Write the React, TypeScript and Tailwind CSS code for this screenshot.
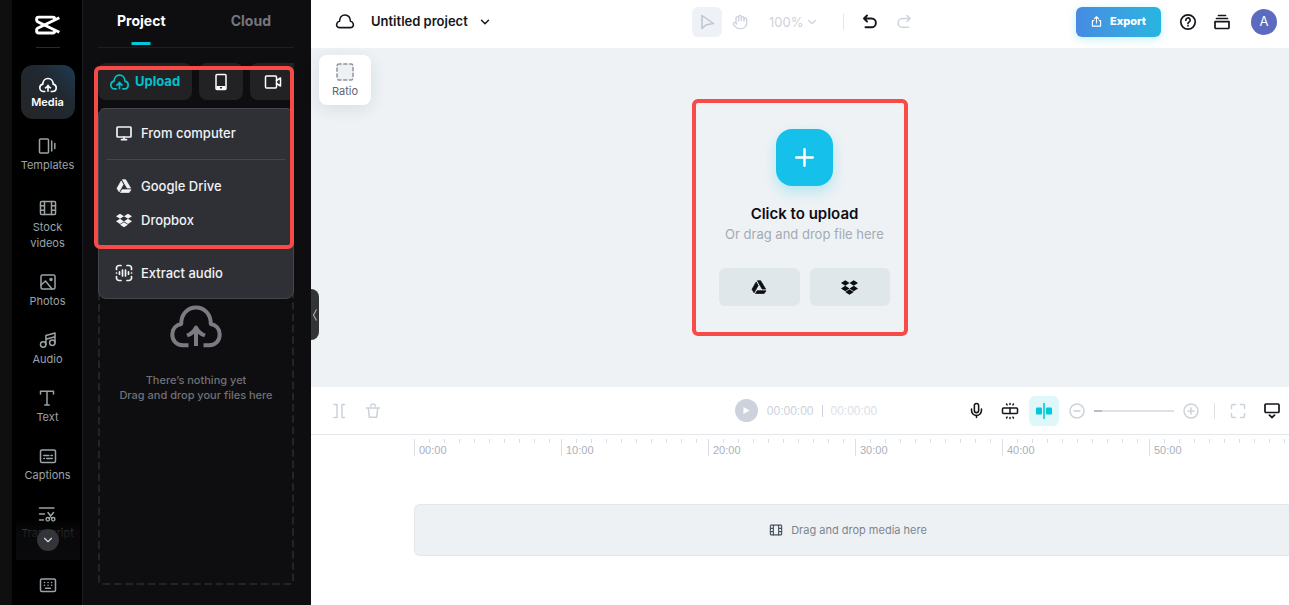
import * as React from 'react';
import { FaDropbox } from 'react-icons/fa';
import { ChevronDown, ChevronLeft, Hand, Mic } from 'lucide-react';

const RULER_MARKS = ['00:00', '10:00', '20:00', '30:00', '40:00', '50:00'];
const MINOR_TICKS = [1, 2, 3, 4, 5, 6, 7, 8, 9];

type IconProps = { className?: string; strokeWidth?: number };

function Svg({
  box,
  className,
  strokeWidth = 1.5,
  children,
}: IconProps & { box: string; children: React.ReactNode }) {
  return (
    <svg
      viewBox={box}
      className={className}
      fill="none"
      stroke="currentColor"
      strokeWidth={strokeWidth}
      strokeLinecap="round"
      strokeLinejoin="round"
      aria-hidden="true"
    >
      {children}
    </svg>
  );
}

function LogoIcon({ className }: IconProps) {
  return (
    <svg viewBox="0 0 76 60" className={className} fill="none" stroke="currentColor" strokeWidth="9" aria-hidden="true">
      <path d="M60 15v-3a6 6 0 0 0-6-6H11a6 6 0 0 0-6 6v3q0 3 3 5L74 52" />
      <path d="M60 45v3a6 6 0 0 1-6 6H11a6 6 0 0 1-6-6v-3q0-3 3-5L74 8" />
    </svg>
  );
}

function CloudUploadIcon({ className, strokeWidth = 4 }: IconProps) {
  return (
    <svg viewBox="0 0 52 43" className={className} fill="none" stroke="currentColor" strokeWidth={strokeWidth} strokeLinejoin="round" aria-hidden="true">
      <path d="M18.500 40.300H13C7 40.300 2.300 36 2.300 29.500c0-5.500 3.500-9.500 8.900-10.500C11.200 9 17.500 2.500 26 2.500S40.800 9 40.800 19c5.400 1 8.900 5 8.900 10.500 0 6.500-4.700 10.800-10.700 10.800h-5.500" />
      <path d="M26 41V22.500M17 30.500l2.500-1Q24 27 26 22.500q2 4.500 6.500 7l2.500 1" />
    </svg>
  );
}

function DriveIcon({ className }: IconProps) {
  return (
    <svg viewBox="0 0 22 20" className={className} fill="currentColor" stroke="currentColor" strokeLinejoin="round" aria-hidden="true">
      <path d="M8.700 1H13.300L20.500 13H15.500Z" />
      <path d="M7 2.800L9.800 7.800L4 18.300L1 13.300Z" />
      <path d="M8.300 15.300H21L18.300 19.300H6Z" />
    </svg>
  );
}

function FilmIcon({ className }: IconProps) {
  return (
    <Svg box="0 0 18 16" className={className}>
      <rect x="1.500" y="1.500" width="15" height="13" rx="1" />
      <path d="M5.500 1.500v13M12.500 1.500v13M1.500 5.800h4M1.500 10.200h4M12.500 5.800h4M12.500 10.200h4" />
    </Svg>
  );
}

function TemplatesIcon({ className }: IconProps) {
  return (
    <Svg box="0 0 18 18" className={className}>
      <rect x="1.500" y="2" width="9" height="14" rx="1" />
      <path d="M13.700 4v10M16.800 6.500v5" />
    </Svg>
  );
}

function PhotosIcon({ className }: IconProps) {
  return (
    <Svg box="0 0 18 18" className={className}>
      <rect x="2" y="2" width="14" height="14" rx="1.500" />
      <path d="M2 12l4.500-4L13 16" />
      <circle cx="12" cy="6.500" r="1" fill="currentColor" />
    </Svg>
  );
}

function AudioIcon({ className }: IconProps) {
  return (
    <Svg box="0 0 18 18" className={className}>
      <circle cx="4.200" cy="13.500" r="2.700" />
      <circle cx="13.300" cy="11.800" r="2.700" />
      <path d="M6.900 13.500V4.500L16 2v9.800M6.900 8.200L16 5.800" />
    </Svg>
  );
}

function TextIcon({ className }: IconProps) {
  return (
    <Svg box="0 0 18 18" className={className}>
      <path d="M2.500 5V2.300h13V5M9 2.300V16M6.800 16h4.400" />
    </Svg>
  );
}

function CaptionsIcon({ className }: IconProps) {
  return (
    <Svg box="0 0 18 18" className={className}>
      <rect x="1.500" y="3" width="15" height="12.500" rx="1.500" />
      <path d="M4.800 8.500h5M12 8.500h1.300M4.800 11.500h.6M7.600 11.500h5.700" />
    </Svg>
  );
}

function TranscriptIcon({ className }: IconProps) {
  return (
    <Svg box="0 0 18 18" className={className}>
      <path d="M1.500 3h14.500M1.500 9h5M1.500 15h4" />
      <path d="M10 7.500l4 5.500M15.500 7.500l-4.500 5.500" />
      <circle cx="9.800" cy="14.300" r="1.700" />
      <circle cx="15.200" cy="14.300" r="1.700" />
    </Svg>
  );
}

function KeyboardIcon({ className }: IconProps) {
  return (
    <Svg box="0 0 18 18" className={className}>
      <rect x="1.500" y="3" width="15" height="12.500" rx="1.500" />
      <path d="M5.500 6.500h.1M9 6.500h.1M12.500 6.500h.1M5.500 9.200h.1M9 9.200h.1M12.500 9.200h.1M6.500 12.300h5" />
    </Svg>
  );
}

const NAV_ITEMS = [
  { label: 'Templates', Icon: TemplatesIcon, className: 'mb-1' },
  { label: 'Stock videos', Icon: FilmIcon, className: '' },
  { label: 'Photos', Icon: PhotosIcon, className: '' },
  { label: 'Audio', Icon: AudioIcon, className: '' },
  { label: 'Text', Icon: TextIcon, className: '' },
  { label: 'Captions', Icon: CaptionsIcon, className: '' },
  { label: 'Transcript', Icon: TranscriptIcon, className: '' },
];

function NavRail() {
  return (
    <aside className="flex w-[71px] shrink-0 flex-col items-center border-r border-[#1c1c20] bg-black pl-px text-[#9ba3a6]">
      <LogoIcon className="mt-[15px] h-5 w-[25px] shrink-0 text-white" />
      <div className="mt-3 h-px w-6 shrink-0 bg-[#2a2a2c]" />
      <nav className="relative mt-[17px] flex min-h-0 w-16 flex-1 flex-col items-center overflow-hidden">
        <button className="mb-[7px] flex h-[54px] w-[54px] shrink-0 flex-col items-center justify-center rounded-xl bg-linear-to-bl from-[#1d3a54] via-[#202830] via-40% to-[#242528] pt-0.5 text-white">
          <CloudUploadIcon className="h-[18px] w-[18px]" strokeWidth={4.600} />
          <span className="text-[11px] leading-4 font-semibold">Media</span>
        </button>
        {NAV_ITEMS.map(({ label, Icon, className }) => (
          <button key={label} className={`flex shrink-0 flex-col items-center gap-0.5 py-[11px] ${className}`}>
            <Icon className="h-[18px] w-[18px]" />
            <span className="max-w-[54px] text-center text-[11px] leading-4">{label}</span>
          </button>
        ))}
        <div className="absolute inset-x-0 bottom-0 flex h-[41px] justify-center bg-linear-to-b from-transparent via-[#0a0a0c]/85 via-30% to-[#0a0a0c]">
          <button aria-label="More tools" className="mt-2.5 flex h-[22px] w-[22px] items-center justify-center rounded-full bg-[#34353a] text-[#d5d7da]">
            <ChevronDown size={14} />
          </button>
        </div>
      </nav>
      <button aria-label="Keyboard shortcuts" className="flex h-[45px] shrink-0 items-center pt-1">
        <KeyboardIcon className="h-[18px] w-[18px]" />
      </button>
    </aside>
  );
}

function MenuItem({ icon, label }: { icon: React.ReactNode; label: string }) {
  return (
    <button role="menuitem" className="flex h-[34px] items-center gap-[9px] px-[9px] text-[13px] font-medium text-[#f2f3f5]">
      <span className="flex w-4 justify-center">{icon}</span>
      {label}
    </button>
  );
}

function UploadMenu() {
  return (
    <div role="menu" className="absolute inset-x-0 top-0 flex flex-col rounded-lg border border-[#46474d] bg-[#2f3036] px-2 pt-[7px] pb-2">
      <MenuItem
        label="From computer"
        icon={
          <Svg box="0 0 16 16" className="h-4 w-4" strokeWidth={1.700}>
            <rect x="1" y="2" width="14" height="10" rx="0.800" />
            <path d="M8 12v2.500M5.500 14.700h5" />
          </Svg>
        }
      />
      <div className="my-[9px] h-px bg-[#46474d]" />
      <MenuItem label="Google Drive" icon={<DriveIcon className="h-3.5 w-4" />} />
      <MenuItem label="Dropbox" icon={<FaDropbox size={17} />} />
      <div className="my-[9px] h-px bg-[#46474d]" />
      <MenuItem
        label="Extract audio"
        icon={
          <Svg box="0 0 16 16" className="h-4 w-4 overflow-visible" strokeWidth={1.700}>
            <path d="M0.500 4.500V3A2.500 2.500 0 0 1 3 0.500h2M11 0.500h2A2.500 2.500 0 0 1 15.500 3v1.500M15.500 11.500V13a2.500 2.500 0 0 1-2.500 2.500h-2M5 15.500H3A2.500 2.500 0 0 1 0.500 13v-1.500" />
            <path d="M0.500 8h.1M3.500 6.800v2.400M6.500 5v6M9.500 5v6M12.500 6.800v2.400M15.500 8h.1" />
          </Svg>
        }
      />
    </div>
  );
}

function MediaPanel() {
  return (
    <section className="relative flex w-[228px] shrink-0 flex-col bg-[#0e0e10] pr-[17px] pb-[22px] pl-[15px]">
      <div role="tablist" className="flex h-12 shrink-0 justify-between border-b border-[#1f1f22] pr-[23px] pl-[19px] text-sm font-bold">
        <button role="tab" aria-selected="true" className="relative pb-1.5 text-white">
          Project
          <span className="absolute bottom-0.5 left-1/2 h-[3px] w-[19px] -translate-x-1/2 bg-[#00c8dc]" />
        </button>
        <button role="tab" aria-selected="false" className="pb-1.5 text-[#75767c]">
          Cloud
        </button>
      </div>

      <div className="mt-[15px] flex h-[37px] shrink-0 gap-[7px] text-white">
        <button className="flex flex-1 items-center gap-1.5 rounded-lg bg-[#222225] pl-3 text-[13px] font-bold text-[#00c1cd]">
          <CloudUploadIcon className="h-[18px] w-[19px]" strokeWidth={4.600} />
          Upload
        </button>
        <button aria-label="Upload from phone" className="flex w-11 items-center justify-center rounded-lg bg-[#222225]">
          <Svg box="0 0 16 18" className="h-[18px] w-4">
            <rect x="3" y="1.500" width="10" height="15" rx="1" />
            <path d="M3.500 14.500h9" strokeWidth="3" strokeLinecap="butt" />
            <path d="M7.500 14.700h1" stroke="#222225" />
          </Svg>
        </button>
        <button aria-label="Record" className="flex w-11 items-center justify-center rounded-l-lg bg-[#222225] pl-0.5">
          <Svg box="0 0 18 16" className="h-4 w-[18px]">
            <rect x="1.500" y="2" width="11" height="12" rx="1" />
            <path d="M12.500 6.500l4-2.500v8l-4-2.500" />
          </Svg>
        </button>
      </div>

      <div className="relative mt-2 flex flex-1 flex-col items-center justify-center pt-[17px] text-center text-[11px] leading-[15px] font-medium text-[#707177]">
        <svg className="absolute inset-0 h-full w-full overflow-visible" aria-hidden="true">
          <rect x="1" y="1" width="99%" height="100%" rx="2" fill="none" stroke="#2c2d31" strokeWidth="1.500" strokeDasharray="7.500 3.800" />
        </svg>
        <CloudUploadIcon className="mb-[25px] h-[43px] w-[52px] text-[#7b7c83]" />
        <p>There’s nothing yet</p>
        <p>Drag and drop your files here</p>
        <UploadMenu />
      </div>

      <div className="pointer-events-none absolute top-[66px] right-[17px] left-[11px] h-[183px] rounded-md border-4 border-[#f84a46]" />
      <button aria-label="Collapse panel" className="absolute top-[289px] -right-2 z-10 h-[51px] w-2 rounded-r-lg bg-[#323436] text-[#a5a7aa]">
        <svg viewBox="0 0 6 12" className="mx-auto h-3 w-1.5" fill="none" stroke="currentColor" strokeWidth="1.200" aria-hidden="true">
          <path d="M4.500 0.500L1.500 6l3 5.500" />
        </svg>
      </button>
    </section>
  );
}

function EditorHeader() {
  return (
    <header className="grid h-12 shrink-0 grid-cols-[1fr_auto_1fr] items-center bg-white pr-3 pb-[5px] pl-4 text-[#14161c]">
      <div className="flex items-center pl-2">
        <Svg box="0 0 20 16" className="h-[15px] w-5" strokeWidth={1.700}>
          <path d="M4 14.500h12c2.500 0 3.300-2 2.800-4-.4-1.700-1.500-2.500-3-2.700C15.800 4 13.700 1 10 1S4.200 4 4.200 7.800c-1.500.2-2.600 1-3 2.700-.5 2 .3 4 2.800 4z" />
        </Svg>
        <button className="ml-4 flex items-center gap-2.5 text-[13px] font-semibold">
          Untitled project
          <ChevronDown size={14} strokeWidth={2.500} />
        </button>
      </div>

      <div className="flex items-center text-[#cdd3dc]">
        <button aria-label="Select" className="flex h-[30px] w-[30px] items-center justify-center rounded-md bg-[#eef1f5] text-[#bcc5d0]">
          <Svg box="0 0 16 16" className="h-4 w-4">
            <path d="M3 1.500v13l4.200-3.800 7.300-1.200z" />
          </Svg>
        </button>
        <button aria-label="Pan" className="ml-2.5">
          <Hand size={16} strokeWidth={2} />
        </button>
        <div className="relative ml-[21px] flex items-center">
          <select aria-label="Zoom" className="h-6 w-[50px] appearance-none bg-transparent text-[13px] leading-6 text-[#cdd3dc]">
            <option>100%</option>
          </select>
          <ChevronDown className="pointer-events-none absolute right-0" size={14} />
        </div>
        <div className="ml-6 h-4 w-px bg-[#e2e6eb]" />
        <button aria-label="Undo" className="ml-[18px] text-[#14161c]">
          <Svg box="0 0 16 16" className="h-4 w-4" strokeWidth={1.900}>
            <path d="M5 1.500L2 4.500l3 3M2.500 4.500H9.500a4.300 4.300 0 0 1 0 8.800H3.500" />
          </Svg>
        </button>
        <button aria-label="Redo" className="ml-[18px]">
          <Svg box="0 0 16 16" className="h-4 w-4">
            <path d="M11 1.500l3 3-3 3M13.500 4.500H6.500a4.300 4.300 0 0 0 0 8.800h6" />
          </Svg>
        </button>
      </div>

      <div className="flex items-center justify-end">
        <button className="flex h-[30px] w-[85px] items-center justify-center gap-2 rounded-md bg-linear-to-r from-[#468be2] to-[#26b5e0] text-[11px] font-extrabold text-white shadow-[0_2px_8px_rgba(0,190,220,0.25)]">
          <Svg box="0 0 12 12" className="h-[11px] w-[11px]" strokeWidth={1.200}>
            <path d="M6 7.500V1M3.800 3L6 0.800 8.200 3M3 5H1.500v6h9V5H9" />
          </Svg>
          Export
        </button>
        <button aria-label="Help" className="ml-[18px]">
          <Svg box="0 0 18 18" className="h-[18px] w-[18px]" strokeWidth={1.700}>
            <circle cx="9" cy="9" r="7.200" />
            <path d="M6.800 7.200a2.200 2.200 0 1 1 3.300 1.900C9.300 9.500 9 9.800 9 10.500M9 12.700v.1" />
          </Svg>
        </button>
        <button aria-label="Tasks" className="ml-4">
          <Svg box="0 0 18 18" className="h-[18px] w-[18px]" strokeWidth={1.700}>
            <path d="M5.500 2.500h7M3.500 5.500h11" />
            <path d="M2 8.700h14V14.500a1 1 0 0 1-1 1H3a1 1 0 0 1-1-1z" />
          </Svg>
        </button>
        <button aria-label="Account" className="ml-5 h-[26px] w-[26px] rounded-full bg-[#5c6ac0] text-[13px] text-white">
          A
        </button>
      </div>
    </header>
  );
}

function Canvas() {
  return (
    <div className="relative flex flex-1 items-center justify-center bg-[#eef2f5]">
      <button className="absolute top-[7px] left-2 flex h-[50px] w-[52px] flex-col items-center justify-center gap-0.5 rounded-lg bg-white pt-px text-[11px] leading-4 text-[#5f646e] shadow-[0_4px_16px_rgba(30,50,70,0.10)]">
        <Svg box="0 0 18 18" className="h-[18px] w-[18px] text-[#8f959f]">
          <rect x="1" y="1" width="16" height="16" rx="2" fill="#eef1f4" strokeDasharray="3.200 2.600" strokeDashoffset="1" />
        </Svg>
        Ratio
      </button>

      <div className="flex w-[216px] flex-col items-center rounded-md border-4 border-[#f84a46] pt-[26px] pr-3.5 pb-[26px] pl-[23px]">
        <button aria-label="Add media" className="flex h-[57px] w-[57px] items-center justify-center rounded-2xl bg-[#15c1ea] text-white shadow-[0_6px_14px_rgba(0,200,225,0.25)]">
          <Svg box="0 0 20 20" className="h-[19px] w-[19px]" strokeWidth={2.600}>
            <path d="M10 1.300v17.400M1.300 10h17.400" />
          </Svg>
        </button>
        <p className="mt-[18px] text-[15px] leading-5 font-semibold text-[#0c0e12]">Click to upload</p>
        <p className="text-[13px] leading-5 whitespace-nowrap text-[#a3abb3]">Or drag and drop file here</p>
        <div className="mt-6 flex gap-2.5 self-stretch text-[#0c0e12]">
          <button aria-label="Google Drive" className="flex h-[38px] flex-1 items-center justify-center rounded-md bg-[#e0e7ea]">
            <DriveIcon className="h-3.5 w-4" />
          </button>
          <button aria-label="Dropbox" className="flex h-[38px] flex-1 items-center justify-center rounded-md bg-[#e0e7ea]">
            <FaDropbox size={17} />
          </button>
        </div>
      </div>
    </div>
  );
}

function TimelineToolbar() {
  return (
    <div className="grid h-12 grid-cols-[1fr_auto_1fr] items-center border-b border-[#e3e6ea] pr-2 pl-5 text-[#ccd2db]">
      <div className="flex items-center gap-[18px]">
        <button aria-label="Split">
          <Svg box="0 0 16 16" className="h-4 w-4">
            <path d="M3 1.500h3v13H3M13.500 1.500h-2.500v13h2.500" />
          </Svg>
        </button>
        <button aria-label="Delete">
          <Svg box="0 0 16 16" className="h-4 w-4">
            <path d="M1.500 5h13M3.300 5l1 9.300h7.400l1-9.300M5.500 3a2.600 2.600 0 0 1 5 0" />
          </Svg>
        </button>
      </div>

      <div className="flex items-center font-['Liberation_Sans',Arial,sans-serif] text-xs">
        <button aria-label="Play" className="mr-[9px] flex h-[23px] w-[23px] items-center justify-center rounded-full bg-[#ccd3dc]">
          <svg viewBox="0 0 8 8" className="ml-px h-[7px] w-[7px]" fill="#fff" aria-hidden="true">
            <path d="M0.500 0L7.500 4L0.500 8z" />
          </svg>
        </button>
        <span>00:00:00</span>
        <span className="mx-2 h-3 w-px bg-[#ccd2db]" />
        <span className="text-[#dbe0e6]">00:00:00</span>
      </div>

      <div className="flex items-center justify-end">
        <button aria-label="Record voiceover" className="text-[#14161c]">
          <Mic size={17} strokeWidth={2.200} />
        </button>
        <button aria-label="Auto snapping" className="ml-4 text-[#14161c]">
          <Svg box="0 0 18 18" className="h-[18px] w-[18px]">
            <rect x="1.500" y="6" width="15" height="5.500" rx="1" />
            <path d="M9 6v5.500M9 1.500v1M5.500 2l.6.9M12.500 2l-.6.9M9 15.500v1M5.500 16l.6-.9M12.500 16l-.6-.9" />
          </Svg>
        </button>
        <button aria-label="Magnet" className="ml-2.5 flex h-[30px] w-[30px] items-center justify-center rounded-md bg-[#def7f9] text-[#00c8dc]">
          <svg viewBox="0 0 18 18" className="h-[18px] w-[18px]" fill="currentColor" aria-hidden="true">
            <rect x="1" y="5.500" width="6" height="7" rx="1" />
            <rect x="11" y="5.500" width="6" height="7" rx="1" />
            <rect x="8.200" y="1" width="1.600" height="16" />
          </svg>
        </button>
        <button aria-label="Zoom out" className="ml-2.5">
          <Svg box="0 0 16 16" className="h-4 w-4">
            <circle cx="8" cy="8" r="7" />
            <path d="M5 8h6" />
          </Svg>
        </button>
        <input
          type="range"
          aria-label="Timeline zoom"
          defaultValue={0}
          className="ml-[9px] h-0.5 w-20 appearance-none bg-[#dde2e8] [&::-webkit-slider-thumb]:h-0.5 [&::-webkit-slider-thumb]:w-2 [&::-webkit-slider-thumb]:appearance-none [&::-webkit-slider-thumb]:bg-[#b5bec9]"
        />
        <button aria-label="Zoom in" className="ml-[9px]">
          <Svg box="0 0 16 16" className="h-4 w-4">
            <circle cx="8" cy="8" r="7" />
            <path d="M5 8h6M8 5v6" />
          </Svg>
        </button>
        <div className="ml-[15px] h-4 w-px bg-[#dde2e8]" />
        <button aria-label="Fit timeline" className="ml-[15px]">
          <Svg box="0 0 16 16" className="h-4 w-4">
            <path d="M1.500 5.500V3A1.500 1.500 0 0 1 3 1.500h2.500M10.500 1.500H13A1.500 1.500 0 0 1 14.500 3v2.500M14.500 10.500V13a1.500 1.500 0 0 1-1.500 1.500h-2.500M5.500 14.500H3A1.500 1.500 0 0 1 1.500 13v-2.500" />
          </Svg>
        </button>
        <button aria-label="Preview quality" className="ml-[17px] text-[#14161c]">
          <Svg box="0 0 18 18" className="h-[18px] w-[18px]" strokeWidth={1.700}>
            <rect x="2" y="2" width="14" height="8.500" rx="1" />
            <path d="M6.500 13.200L9 15.500l2.500-2.300" />
          </Svg>
        </button>
      </div>
    </div>
  );
}

function Timeline() {
  return (
    <section className="h-[218px] shrink-0 bg-white">
      <TimelineToolbar />
      <div className="ml-[103px] overflow-hidden">
        <div className="mt-1 flex">
          {RULER_MARKS.map((mark) => (
            <div key={mark} className="relative h-[17px] w-[147px] shrink-0 border-l border-[#dcdfe4]">
              <div className="ml-3.5 flex gap-[14px]">
                {MINOR_TICKS.map((t) => (
                  <span key={t} className="h-1 w-px shrink-0 bg-[#dcdfe4]" />
                ))}
              </div>
              <span className="absolute top-1 left-1 font-['Liberation_Sans',Arial,sans-serif] text-[11px] leading-[14px] text-[#a9afbc]">{mark}</span>
            </div>
          ))}
        </div>
        <div className="mt-12 flex h-[52px] items-center justify-center gap-2 rounded-l-md border border-r-0 border-[#e3e8ec] bg-[#edf1f4] pr-2 text-[11px] text-[#7d8490]">
          <FilmIcon className="h-3 w-3.5 text-[#4b5260]" />
          Drag and drop media here
        </div>
      </div>
    </section>
  );
}

export default function App() {
  return (
    <div className="flex h-screen min-h-[480px] overflow-hidden bg-[#0f0f10] pl-3 font-['Inter',sans-serif]">
      <NavRail />
      <MediaPanel />
      <main className="flex min-w-0 flex-1 flex-col">
        <EditorHeader />
        <Canvas />
        <Timeline />
      </main>
    </div>
  );
}
